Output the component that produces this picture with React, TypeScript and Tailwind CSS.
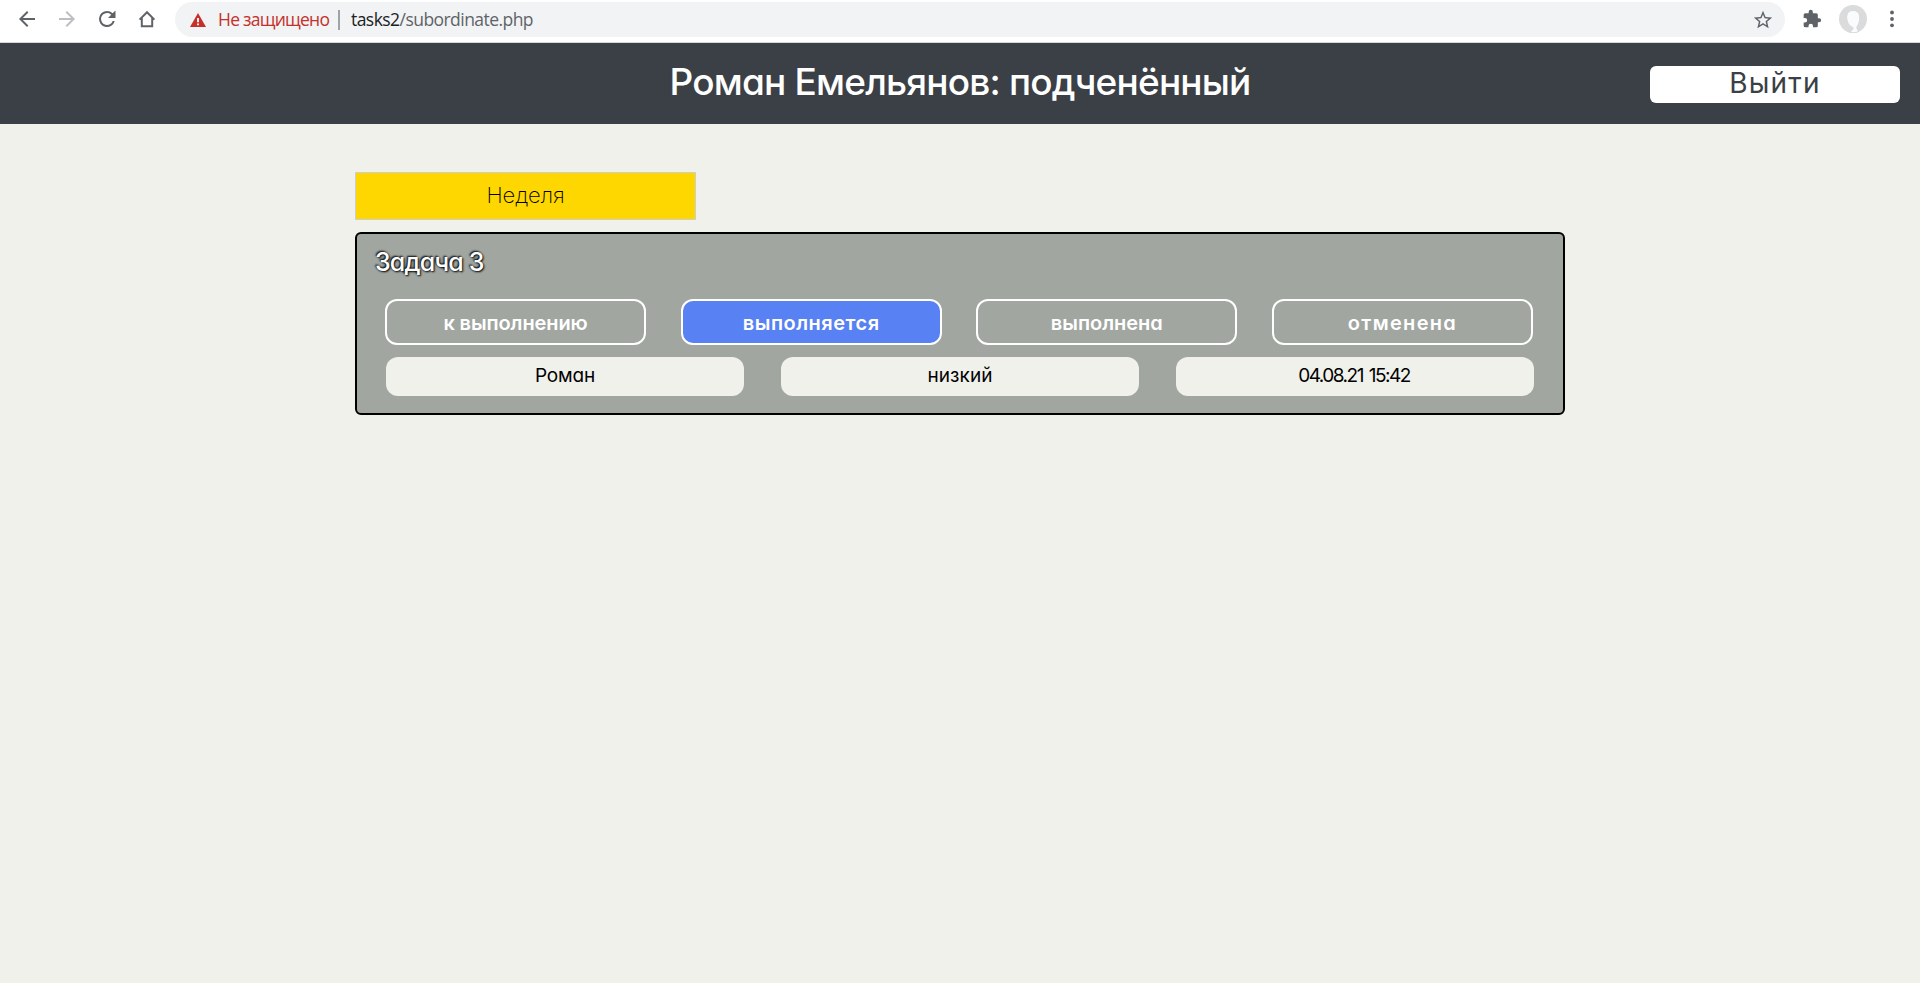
type Status = { label: string; active?: boolean; text: string };

const statuses: Status[] = [
  { label: 'к выполнению', text: 'tracking-[-0.1px]' },
  { label: 'выполняется', active: true, text: 'tracking-[0.5px]' },
  { label: 'выполнена', text: 'tracking-[0px]' },
  { label: 'отменена', text: 'tracking-[1.3px]' },
];

const details = [
  { value: 'Роман', text: 'tracking-[-0.2px]' },
  { value: 'низкий', text: 'tracking-[0.1px]' },
  { value: '04.08.21 15:42', text: 'tracking-[-1.5px] [word-spacing:2px] pr-0.5' },
];

function BrowserBar() {
  return (
    <div className="flex h-[43px] items-start border-b border-[#d5d9d9] bg-white pt-[2px] text-[#5f6368]">
      <div className="flex h-[34px] w-[175px] shrink-0 items-center gap-4 pl-[15px]">
        <svg className="size-6" viewBox="0 0 24 24" fill="currentColor">
          <path d="M20 11H7.83l5.59-5.59L12 4l-8 8 8 8 1.41-1.41L7.83 13H20z" />
        </svg>
        <svg className="size-6 text-[#bcbec1]" viewBox="0 0 24 24" fill="currentColor">
          <path d="M4 11h12.17l-5.59-5.59L12 4l8 8-8 8-1.41-1.41L16.17 13H4z" />
        </svg>
        <svg className="size-6" viewBox="0 0 24 24" fill="currentColor">
          <path d="M17.65 6.35A7.96 7.96 0 0 0 12 4a8 8 0 1 0 7.73 10h-2.08A6 6 0 1 1 12 6c1.66 0 3.14.69 4.22 1.78L13 11h7.5V3.5z" />
        </svg>
        <svg className="size-6" viewBox="0 0 24 24" fill="none" stroke="currentColor" strokeWidth="2">
          <path d="M4.6 12.6 12 5.2l7.4 7.4M6.8 11v8.2h10.4V11" />
        </svg>
      </div>
      <div className="flex h-[35px] w-[1610px] shrink-0 items-center rounded-full bg-[#f1f3f4] pr-[11px] pl-[15px] font-['Open_Sans',sans-serif] text-[17.5px] leading-[35px]">
        <svg className="mt-px h-[14px] w-4 shrink-0" viewBox="0 0 16 14">
          <path d="M8 0 16 14H0z" fill="#c5302a" />
          <path d="M7.1 5h1.8v4.2H7.1zM7.1 10.4h1.8v1.8H7.1z" fill="#fff" />
        </svg>
        <span className="ml-3 w-[112px] whitespace-nowrap tracking-[-0.75px] text-[#c5302a]">Не защищено</span>
        <span className="ml-[8px] h-5 w-[2px] bg-[#9fa2a6]" />
        <span className="ml-[11px] flex-1 whitespace-nowrap tracking-[-0.55px] text-[#5f6368]">
          <span className="text-[#202124]">tasks2</span>/subordinate.php
        </span>
        <svg className="size-[22px]" viewBox="0 0 24 24" fill="currentColor">
          <path d="m22 9.24-7.19-.62L12 2 9.19 8.63 2 9.24l5.46 4.73L5.82 21 12 17.27 18.18 21l-1.63-7.03zM12 15.4l-3.76 2.27 1-4.28-3.32-2.88 4.38-.38L12 6.1l1.71 4.04 4.38.38-3.32 2.88 1 4.28z" />
        </svg>
      </div>
      <div className="flex h-[34px] flex-1 items-center">
        <svg className="ml-[17px] size-5" viewBox="0 0 24 24" fill="currentColor">
          <path d="M20.5 11H19V7a2 2 0 0 0-2-2h-4V3.5a2.5 2.5 0 0 0-5 0V5H4a2 2 0 0 0-1.99 2v3.8H3.5a2.7 2.7 0 0 1 0 5.4H2V20a2 2 0 0 0 2 2h3.8v-1.5a2.7 2.7 0 0 1 5.4 0V22H17a2 2 0 0 0 2-2v-4h1.5a2.5 2.5 0 0 0 0-5" />
        </svg>
        <svg className="ml-[17px] size-7" viewBox="0 0 28 28">
          <circle cx="14" cy="14" r="14" fill="#dbdbdb" />
          <path d="M14 5.500c-4.500 0-6.300 3-6.300 7 0 4 2 8 4.600 9.200 1 .4 1.700.3 1.700 1.300 0 1.500-1.500 3-3.500 4.300 3 .8 7 .5 9.500-1-1.500-1-2.500-3-2-4.800 1.500-1.500 2.700-5 2.700-9 0-4-2.200-7-6.700-7" fill="#f9fbfd" stroke="#cbd5dc" strokeWidth=".8" />
        </svg>
        <svg className="ml-[13px] size-6" viewBox="0 0 24 24" fill="currentColor">
          <circle cx="12" cy="5.500" r="1.900" />
          <circle cx="12" cy="12" r="1.900" />
          <circle cx="12" cy="18.300" r="1.900" />
        </svg>
      </div>
    </div>
  );
}

export default function App() {
  return (
    <div className="h-[983px] overflow-hidden bg-[#f0f1eb] font-[Inter,sans-serif] [font-feature-settings:'cv11']">
      <BrowserBar />
      <header className="grid h-[81px] grid-cols-[1fr_auto_1fr] items-center bg-[#3b3f46] px-5">
        <h1 className="col-start-2 pb-1 text-[37px] leading-[40px] font-medium tracking-[-0.8px] text-white">
          Роман Емельянов: подченённый
        </h1>
        <button className="mt-[2px] h-[37px] w-[250px] justify-self-end rounded-md bg-white pb-[3px] text-[28px] leading-[34px] tracking-[1.2px] text-[#3b3f46]">
          Выйти
        </button>
      </header>
      <main className="mx-auto w-[1210px] pt-12">
        <button className="block h-12 w-[341px] border border-[#cdcdd4] bg-[#ffd700] text-[22px] leading-[44px] font-extralight tracking-[-0.1px] text-black">
          <span className="block h-[46px]">Неделя</span>
        </button>
        <section className="mt-3 h-[183px] rounded-md border-2 border-black bg-[#a1a6a1] pt-3">
          <h2 className="pl-[18px] text-[25px] leading-[32px] font-medium tracking-[-0.8px] text-white [text-shadow:1px_1px_2px_#000,-1px_-1px_2px_#000]">
            Задача 3
          </h2>
          <div className="mt-[21px] flex justify-between pr-[30px] pl-7">
            {statuses.map((s) => (
              <button
                key={s.label}
                className={`h-[46px] w-[261px] rounded-xl border-2 border-white pt-[2px] text-[20px] leading-[40px] font-semibold text-white ${s.text} ${s.active ? 'bg-[#5881f3]' : ''}`}
              >
                {s.label}
              </button>
            ))}
          </div>
          <div className="mt-3 flex justify-between px-[29px]">
            {details.map((d) => (
              <div
                key={d.value}
                className={`h-[39px] w-[358px] rounded-xl bg-[#f0f1eb] text-center text-[19px] leading-[38px] text-black ${d.text}`}
              >
                {d.value}
              </div>
            ))}
          </div>
        </section>
      </main>
    </div>
  );
}
